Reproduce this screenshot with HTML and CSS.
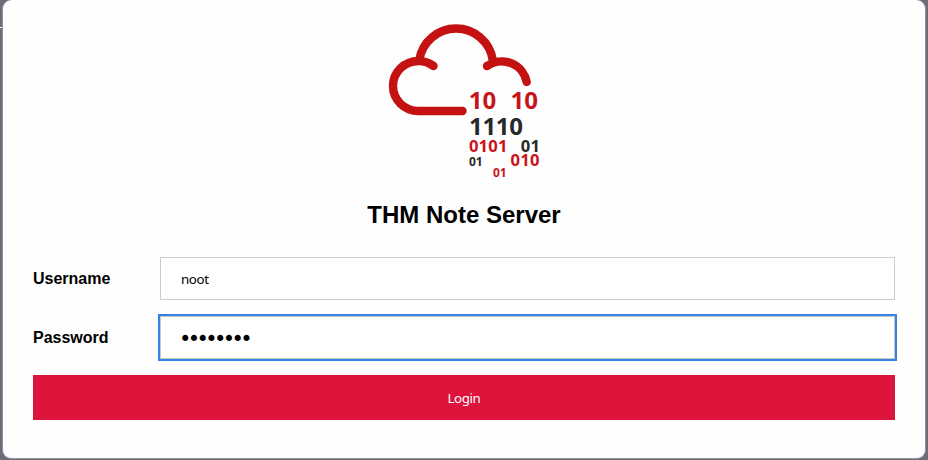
FILE: index.html
```html
<!DOCTYPE html>
<html lang="en">
<head>
<meta charset="utf-8">
<title>THM Note Server</title>
<link rel="stylesheet" href="styles.css">
</head>
<body>
<main class="card">
  <svg class="logo" viewBox="384 20 160 160" width="160" height="160" role="img" aria-label="TryHackMe">
    <g class="cloud">
      <path d="M419.3 60A37.2 37.2 0 0 1 492.8 60"/>
      <path d="M433.5 66A25.5 25 0 0 0 418.5 61A25.5 25 0 0 0 393 86A25.5 25 0 0 0 418.5 111H462.5"/>
      <path d="M487 66A25.5 25.5 0 0 1 526.7 82"/>
    </g>
    <g class="bits">
      <text x="468.8" y="109" font-size="24">10</text>
      <text x="510.5" y="109" font-size="24">10</text>
      <text class="dark" x="469" y="134.5" font-size="24" textLength="54">1110</text>
      <text x="468.9" y="152.4" font-size="16.6" textLength="38.6">0101</text>
      <text class="dark" x="520.8" y="152.4" font-size="16.6" textLength="19.3">01</text>
      <text class="dark" x="468.9" y="166" font-size="12">01</text>
      <text x="510.6" y="166.1" font-size="16.6" textLength="29">010</text>
      <text x="493" y="177" font-size="12">01</text>
    </g>
  </svg>
  <h1 class="title">THM Note Server</h1>
  <form class="form">
    <label class="label" for="username">Username</label>
    <input class="field" id="username" type="text" value="noot">
    <label class="label" for="password">Password</label>
    <input class="field password active" id="password" type="password" value="password">
    <button class="login" type="button">Login</button>
  </form>
</main>
</body>
</html>
```
FILE: styles.css
```css
* { box-sizing: border-box; }

body {
  margin: 0;
  height: 460px;
  padding: 0 2px 1px;
  background: #706d7b;
  overflow: hidden;
}

/* Sliver of the backdrop content beside the card */
body::before {
  content: "";
  position: absolute;
  left: 0;
  top: 27px;
  width: 2px;
  height: 1px;
  background: #fff;
}

.card {
  height: 459px;
  padding: 20px 30px 0;
  border: 1px solid #929198;
  border-top: 0;
  border-radius: 9px;
  background: #fefefe;
  font-family: "Liberation Sans", sans-serif;
  color: #000;
}

.logo { display: block; margin: 0 auto; }

.cloud {
  fill: none;
  stroke: #c41212;
  stroke-width: 8.4;
  stroke-linecap: round;
}

.bits {
  font-family: "Open Sans", sans-serif;
  font-weight: 700;
  fill: #c81418;
}

.dark { fill: #262a29; }

.title {
  margin: 21px 0 28px;
  font-size: 24px;
  line-height: 28px;
  text-align: center;
}

.form {
  display: grid;
  grid-template-columns: 127px 1fr;
  grid-template-rows: 43px 43px 45px;
  row-gap: 16px;
  align-items: center;
}

.label { font-size: 16px; font-weight: 700; }

.field {
  width: 100%;
  height: 43px;
  margin: 0;
  padding: 1px 20px 0;
  border: 1px solid #ccc;
  border-radius: 0;
  background: #fff;
  color: #000;
  font: 13.333px "Noto Sans", sans-serif;
  letter-spacing: -0.4px;
}

.password {
  padding-top: 3px;
  padding-left: 18px;
  font: 21px "DejaVu Sans", sans-serif;
  letter-spacing: -3.63px;
}

.active {
  border-color: #c9c5c2;
  outline: 2px solid #3584e4;
  outline-offset: 0;
}

.login {
  grid-column: 1 / -1;
  height: 45px;
  padding: 1px 0 0;
  border: 0;
  background: #dc143c;
  color: #fff;
  font: 13.333px "Noto Sans", sans-serif;
  letter-spacing: -0.4px;
}
```
